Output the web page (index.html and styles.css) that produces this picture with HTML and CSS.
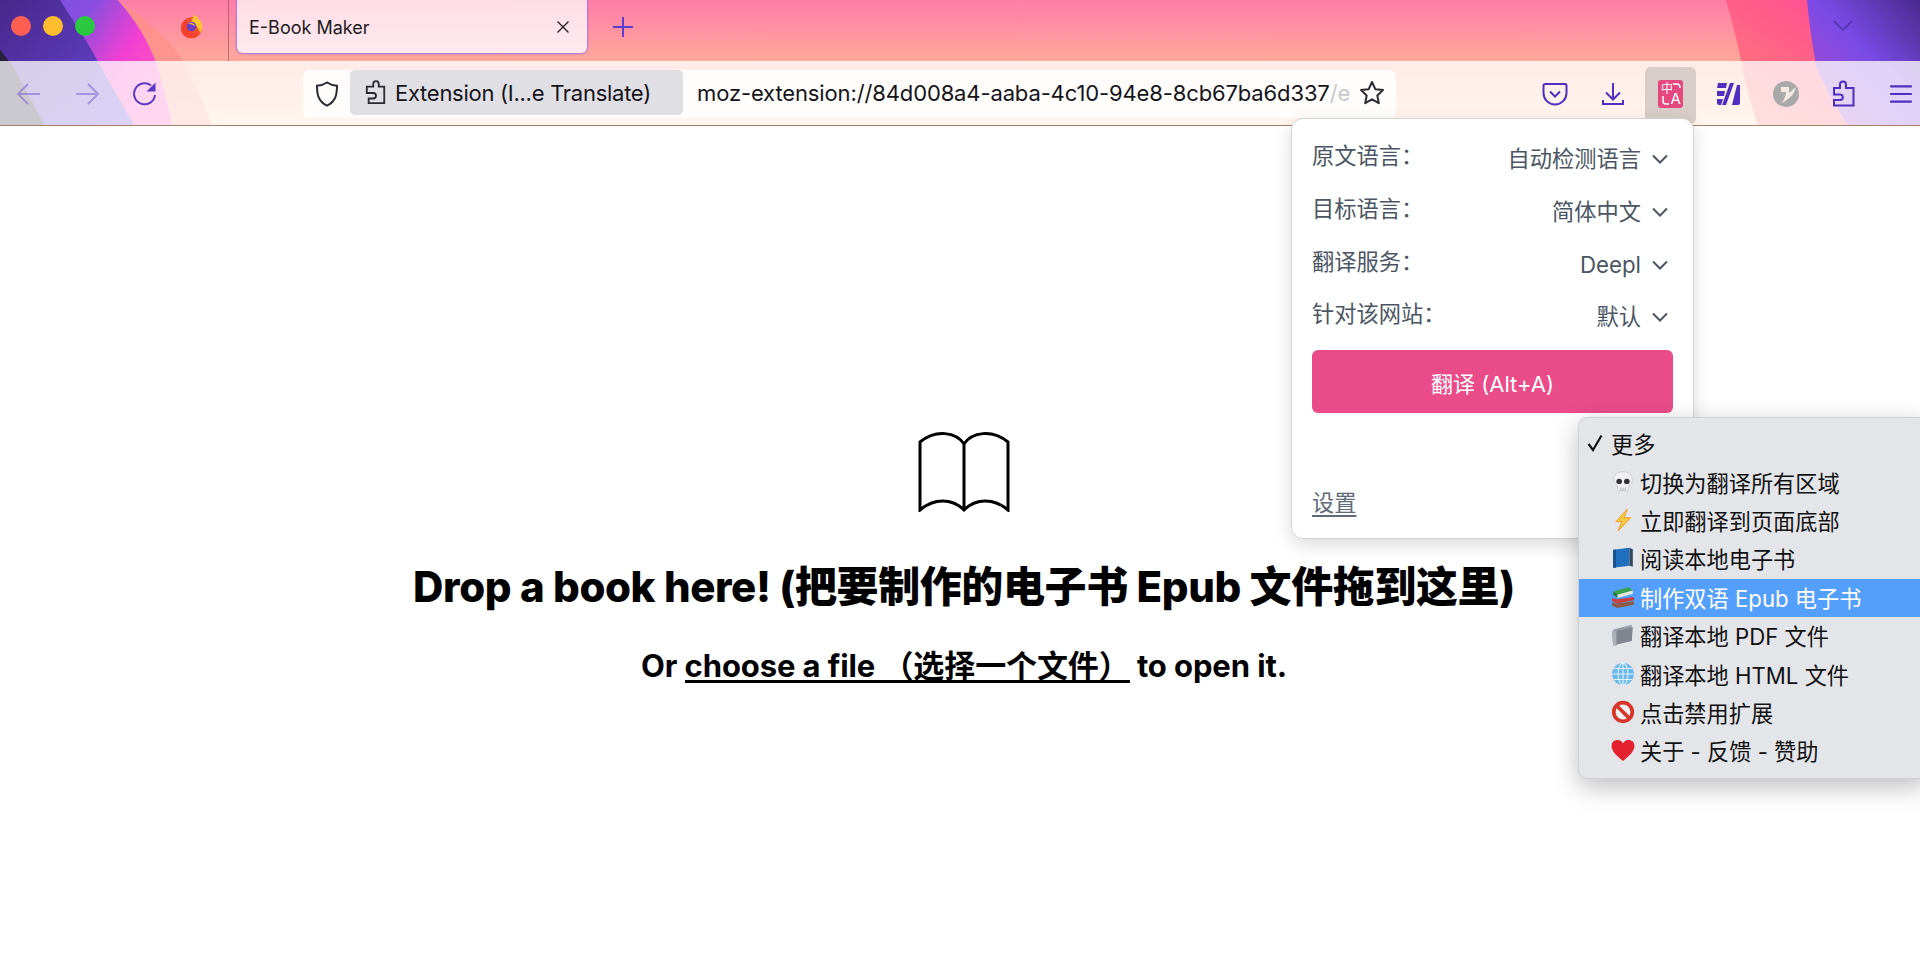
FILE: index.html
```html
<!DOCTYPE html>
<html lang="zh-CN">
<head>
<meta charset="utf-8">
<title>E-Book Maker</title>
<link rel="stylesheet" href="styles.css">
</head>
<body>
<header class="chrome">
  <svg class="theme" viewBox="0 0 1920 126" preserveAspectRatio="none" aria-hidden="true">
    <defs>
      <linearGradient id="base" x1="0" y1="0" x2="0" y2="1"><stop offset="0" stop-color="#ff7da9"/><stop offset=".5" stop-color="#ffa99a"/><stop offset="1" stop-color="#ffd9b8"/></linearGradient>
      <linearGradient id="vl" x1="0" y1="0" x2="1" y2=".5"><stop offset="0" stop-color="#6a4be0"/><stop offset=".45" stop-color="#8a4fe0"/><stop offset=".75" stop-color="#f23fd2"/><stop offset="1" stop-color="#ff55c0"/></linearGradient>
      <linearGradient id="dl" x1="0" y1="0" x2="1" y2="1"><stop offset="0" stop-color="#47288a"/><stop offset="1" stop-color="#6a48dc"/></linearGradient>
      <linearGradient id="vr" x1="1" y1="0" x2="0" y2="1"><stop offset="0" stop-color="#4a2a8c"/><stop offset=".45" stop-color="#7a4ae6"/><stop offset="1" stop-color="#b04cc8"/></linearGradient>
      <linearGradient id="pr" x1="0" y1="1" x2="1" y2="0"><stop offset="0" stop-color="#ff8070"/><stop offset="1" stop-color="#ff3fa0"/></linearGradient>
    </defs>
    <rect width="1920" height="126" fill="url(#base)"/>
    <path d="M0 0H118C150 22 172 42 186 66C196 86 204 106 212 126H0Z" fill="#ff8f88" opacity=".75"/>
    <path d="M0 0H118C135 20 148 40 157 66C163 86 168 106 172 126H0Z" fill="url(#vl)"/>
    <path d="M0 0H60C72 20 88 42 100 66C112 88 124 108 134 126H0Z" fill="url(#dl)"/>
    <path d="M0 50L12 66C25 88 35 108 44 126H0Z" fill="#28203c"/>
    <path d="M1726 0C1732 22 1738 44 1742 66C1746 88 1752 108 1758 126H1920V0Z" fill="url(#pr)"/>
    <path d="M1807 0C1809 22 1812 44 1816 66C1824 88 1836 108 1848 126H1920V0Z" fill="url(#vr)"/>
  </svg>

  <div class="tabbar">
    <div class="lights"><span class="light red"></span><span class="light yellow"></span><span class="light green"></span></div>
    <svg class="fx" viewBox="0 0 26 26" aria-hidden="true">
      <circle cx="13" cy="15" r="11" fill="#f0532f"/>
      <path d="M15 1c3 2 9 6 9 13 0 3-1 5-2 6-2-6-6-10-10-11 2-2 3-5 3-8z" fill="#ffc52e"/>
      <path d="M3 12c1-3 3-5 5-6-1 2 0 3 1 3 4-1 8 1 8 5 0 4-3 6-6 6 4 2 9 0 10-4 0 6-5 9-10 9-6 0-10-5-8-13z" fill="#f4402f"/>
      <circle cx="13" cy="13.500" r="5" fill="#6b3fc4"/>
      <path d="M9 10c3-1 7 0 8 3-2-1-5-2-8-3z" fill="#ffb84a"/>
    </svg>
    <span class="tab-sep"></span>
    <div class="tab">
      <span class="tab-title">E-Book Maker</span>
      <svg class="tab-close" viewBox="0 0 14 14" aria-hidden="true"><path d="M1.500 1.500l11 11M12.500 1.500l-11 11"/></svg>
    </div>
    <svg class="new-tab" viewBox="0 0 22 22" aria-hidden="true"><path d="M11 1v20M1 11h20"/></svg>
    <svg class="all-tabs" viewBox="0 0 20 12" aria-hidden="true"><path d="M1 1l9 9 9-9"/></svg>
  </div>

  <div class="toolbar">
    <div class="nav">
      <button class="nav-btn dim"><svg viewBox="0 0 26 26" aria-hidden="true"><path d="M24 13H2M12 3L2 13l10 10"/></svg></button>
      <button class="nav-btn dim"><svg viewBox="0 0 26 26" aria-hidden="true"><path d="M2 13h22M14 3l10 10-10 10"/></svg></button>
      <button class="nav-btn"><svg viewBox="0 0 26 26" aria-hidden="true"><path d="M23 14a10.500 10.500 0 1 1-4-9.500"/><path class="fill" d="M23.500 1.500v9h-9z"/></svg></button>
    </div>
    <div class="urlbar">
      <svg class="shield" viewBox="0 0 24 26" aria-hidden="true"><path d="M12 1.500c3 2 6 3 10 3.200 0 8-1 16-10 20C3 20.700 2 12.700 2 4.700c4-.2 7-1.200 10-3.200z"/></svg>
      <div class="chip">
        <svg class="chip-icon" viewBox="0 0 24 26" aria-hidden="true"><path d="M9 3a3 3 0 0 1 6 0v3h6v18H4v-5h5a3 3 0 0 0 0-6H2V6h7z"/></svg>
        <span>Extension (I...e Translate)</span>
      </div>
      <div class="url"><span>moz-extension://84d008a4-aaba-4c10-94e8-8cb67ba6d337</span><span class="url-fade">/e</span></div>
      <svg class="star" viewBox="0 0 26 26" aria-hidden="true"><path d="M13 2l3.300 7.200 7.700.9-5.700 5.300 1.500 7.800L13 19.300 6.200 23.200l1.500-7.800L2 10.100l7.700-.9z"/></svg>
    </div>
    <div class="actions">
      <button class="act"><svg viewBox="0 0 26 26" aria-hidden="true"><path d="M3 3h20a1.500 1.500 0 0 1 1.500 1.500V12a11.500 11.500 0 0 1-23 0V4.500A1.500 1.500 0 0 1 3 3z"/><path d="M8 10.500l5 5 5-5"/></svg></button>
      <button class="act"><svg viewBox="0 0 26 26" aria-hidden="true"><path d="M13 2v16M6 11.500l7 7 7-7M3 19v4h20v-4"/></svg></button>
      <button class="act active">
        <span class="tr-logo">
          <span class="tr-zh">中</span><span class="tr-en">A</span>
          <svg class="tr-marks" viewBox="0 0 25 28" aria-hidden="true"><path d="M15 4h4q3 0 3 4M5 16v5q0 3 3 3h3"/></svg>
        </span>
      </button>
      <button class="act"><svg viewBox="0 0 24 26" aria-hidden="true"><path class="solid" d="M2 2h9l-1 5H1zM1 10h8l-1 5H1zM1 18h6l-2 6H3q-2 0-2-2zM14 2h4l-8 22H6zM21 4h3v18q0 2-2 2h-6z"/></svg></button>
      <button class="act"><svg viewBox="0 0 26 26" aria-hidden="true"><circle class="grey" cx="13" cy="13" r="13"/><path class="white" d="M8 6h8v6l7-6c-2 8-7 12-14 16 2-4 4-7 4-11H8z"/></svg></button>
      <button class="act"><svg viewBox="0 0 24 26" aria-hidden="true"><path d="M9 3.500a3 3 0 0 1 6 0V7h7.500v17.500H3V19h6a2.800 2.800 0 0 0 0-5.600H3V7h6z"/></svg></button>
      <button class="act"><svg viewBox="0 0 24 20" aria-hidden="true"><path d="M2 3h20M2 10h20M2 17h20"/></svg></button>
    </div>
  </div>
</header>

<main class="page">
  <svg class="book" viewBox="0 0 92 82" aria-hidden="true"><path d="M46 14C38 2 18-1 2 12v68c14-12 32-12 44 0 12-12 30-12 44 0V12C74-1 54 2 46 14zM46 14v66"/></svg>
  <h1 class="drop-title">Drop a book here! (把要制作的电子书 Epub 文件拖到这里)</h1>
  <p class="drop-sub">Or <a class="file-link" href="#">choose a file （选择一个文件）</a> to open it.</p>
</main>

<section class="popup">
  <div class="row"><span class="row-label">原文语言：</span><span class="row-value">自动检测语言<svg class="chev" viewBox="0 0 16 10" aria-hidden="true"><path d="M1 1.500l7 7 7-7"/></svg></span></div>
  <div class="row"><span class="row-label">目标语言：</span><span class="row-value">简体中文<svg class="chev" viewBox="0 0 16 10" aria-hidden="true"><path d="M1 1.500l7 7 7-7"/></svg></span></div>
  <div class="row"><span class="row-label">翻译服务：</span><span class="row-value">Deepl<svg class="chev" viewBox="0 0 16 10" aria-hidden="true"><path d="M1 1.500l7 7 7-7"/></svg></span></div>
  <div class="row"><span class="row-label">针对该网站：</span><span class="row-value">默认<svg class="chev" viewBox="0 0 16 10" aria-hidden="true"><path d="M1 1.500l7 7 7-7"/></svg></span></div>
  <button class="translate-btn">翻译 (Alt+A)</button>
  <a class="settings" href="#">设置</a>
</section>

<nav class="menu">
  <div class="menu-head"><svg class="check" viewBox="0 0 16 18" aria-hidden="true"><path d="M1.500 10l4.500 6L14.500 1.500"/></svg><span>更多</span></div>
  <div class="menu-item">
    <svg class="emoji" viewBox="0 0 22 22" aria-hidden="true"><path d="M11 1.500c5.500 0 8.500 3 8.500 7.500 0 3-2 4.500-3.500 5.500v4.500H6v-4.500C4.500 13.500 2.500 12 2.500 9c0-4.500 3-7.500 8.500-7.500z" fill="#f0f0f3" stroke="#c4c4ca" stroke-width=".6"/><ellipse cx="7.500" cy="10.500" rx="2.600" ry="2.400" fill="#333"/><ellipse cx="14.500" cy="10.500" rx="2.600" ry="2.400" fill="#333"/><path d="M9 16v3M11 16v3M13 16v3" stroke="#999" stroke-width=".7"/></svg>
    <span>切换为翻译所有区域</span></div>
  <div class="menu-item">
    <svg class="emoji" viewBox="0 0 22 22" aria-hidden="true"><path d="M15 1L4.500 12.500H10L6.500 21 18 9h-6z" fill="#f7c93c" stroke="#ee9a2a" stroke-width=".9" stroke-linejoin="round"/></svg>
    <span>立即翻译到页面底部</span></div>
  <div class="menu-item">
    <svg class="emoji" viewBox="0 0 22 22" aria-hidden="true"><path d="M2 3.500L17 1.500v16.500L2 20z" fill="#1f6fbd"/><path d="M17 1.500l3 1.500v16l-3-1z" fill="#35475c"/><path d="M2 3.500h2.500V20H2z" fill="#174f8c"/></svg>
    <span>阅读本地电子书</span></div>
  <div class="menu-item selected">
    <svg class="emoji" viewBox="0 0 22 22" aria-hidden="true"><path d="M2 6l14-4 4 3-14 4z" fill="#3ca24a"/><path d="M2 6l4 3v3L2 9z" fill="#2a7a36"/><path d="M6 9l14-4v3L6 12z" fill="#e8e8d8"/><path d="M1 12l5 1 15-2v3L6 17l-5-2z" fill="#c4413c"/><path d="M1 16l5 1 15-2v3L6 21l-5-2z" fill="#8c5a44"/></svg>
    <span>制作双语 Epub 电子书</span></div>
  <div class="menu-item">
    <svg class="emoji" viewBox="0 0 22 22" aria-hidden="true"><path d="M2 6l17-4.500V16L2 20.500z" fill="#9aa0a8"/><path d="M1 8l4-1 15-3-1 12.500L2 20.500z" fill="#7f868f"/><path d="M1 8l4-1v14l-3-.5z" fill="#aab0b8"/></svg>
    <span>翻译本地 PDF 文件</span></div>
  <div class="menu-item">
    <svg class="emoji" viewBox="0 0 22 22" aria-hidden="true"><circle cx="11" cy="11" r="10" fill="#6cb8ea"/><g fill="none" stroke="#e0f2fb" stroke-width="1"><ellipse cx="11" cy="11" rx="4.500" ry="10"/><path d="M11 1v20M1 11h20M2.500 6h17M2.500 16h17"/></g></svg>
    <span>翻译本地 HTML 文件</span></div>
  <div class="menu-item">
    <svg class="emoji" viewBox="0 0 22 22" aria-hidden="true"><circle cx="11" cy="11" r="8.500" fill="#f2f2f2" stroke="#d8352a" stroke-width="3.400"/><path d="M5 5l12 12" stroke="#d8352a" stroke-width="3.400"/></svg>
    <span>点击禁用扩展</span></div>
  <div class="menu-item">
    <svg class="emoji" viewBox="0 0 22 22" aria-hidden="true"><path d="M11 21C5 16 .5 12 .5 7A5.500 5.500 0 0 1 11 5a5.500 5.500 0 0 1 10.500 2c0 5-4.500 9-10.500 14z" fill="#e3212f"/></svg>
    <span>关于 - 反馈 - 赞助</span></div>
</nav>
</body>
</html>
```
FILE: styles.css
```css
* { box-sizing: border-box; }
html, body { margin: 0; height: 100%; }
body {
  width: 1920px;
  height: 960px;
  overflow: hidden;
  background: #fff;
  color: #000;
  font-family: "Inter", "Noto Sans CJK SC", sans-serif;
  position: relative;
}
button { border: 0; background: none; padding: 0; font: inherit; }

/* browser chrome */
.chrome {
  position: relative;
  height: 126px;
  display: flex;
  flex-direction: column;
  border-bottom: 1px solid #a5806f;
  overflow: hidden;
}
.theme { position: absolute; inset: 0; width: 100%; height: 100%; }
.tabbar {
  position: relative;
  height: 61px;
  display: flex;
  align-items: flex-start;
}
.lights { display: flex; gap: 12px; padding: 16px 0 0 11px; width: 179px; }
.light { width: 20px; height: 20px; border-radius: 50%; }
.red { background: #ff5f52; }
.yellow { background: #ffbd2e; }
.green { background: #2ac840; }
.fx { width: 25px; height: 26px; margin-top: 13px; }
.tab-sep { width: 1px; height: 61px; background: rgba(120, 70, 80, .55); margin-left: 24px; }
.tab {
  width: 350px;
  height: 53px;
  margin-left: 8px;
  display: flex;
  align-items: center;
  justify-content: space-between;
  padding: 0 17px 0 12px;
  background: linear-gradient(#ffdde6, #ffe9ef);
  border-radius: 0 0 6px 6px;
  box-shadow: 0 0 2px 1px #a077dc;
  color: #1c1b22;
  font-size: 18px;
}
.tab-title { padding-top: 2px; }
.tab-close { width: 14px; height: 14px; fill: none; stroke: #222; stroke-width: 1.400; }
.new-tab { width: 22px; height: 22px; margin: 16px 0 0 25px; fill: none; stroke: #5b3fd0; stroke-width: 2; }
.all-tabs { width: 20px; height: 12px; margin: 20px 67px 0 auto; fill: none; stroke: #5936b8; stroke-width: 1.800; }

.toolbar {
  position: relative;
  flex: 1;
  display: flex;
  align-items: flex-start;
  padding-top: 9px;
  background: rgba(255, 255, 255, .76);
}
.nav { display: flex; width: 174px; }
.nav-btn {
  width: 58px;
  height: 48px;
  display: flex;
  align-items: center;
  justify-content: center;
}
.nav-btn svg { width: 26px; height: 26px; fill: none; stroke: #5a3ac4; stroke-width: 2; }
.nav-btn svg .fill { fill: #5a3ac4; stroke: none; }
.nav-btn.dim svg { opacity: .4; }

.urlbar {
  width: 1093px;
  height: 48px;
  margin-left: 129px;
  display: flex;
  align-items: flex-start;
  background: rgba(255, 255, 255, .82);
  border-radius: 6px;
  color: #15141a;
  font-size: 22px;
}
.shield { width: 24px; height: 26px; margin: 11px 0 0 12px; flex: none; fill: none; stroke: #2b2a33; stroke-width: 2; }
.chip {
  width: 333px;
  height: 45px;
  flex: none;
  margin-left: 11px;
  display: flex;
  align-items: center;
  gap: 8px;
  padding-left: 15px;
  background: #e0dfe3;
  border-radius: 5px;
  white-space: nowrap;
  letter-spacing: -.27px;
}
.chip-icon { width: 22px; height: 26px; flex: none; fill: none; stroke: #2b2a33; stroke-width: 2; }
.url { width: 650px; flex: none; margin-left: 14px; height: 45px; display: flex; align-items: center; white-space: nowrap; letter-spacing: -.13px; }
.url-fade { color: #c9c8cc; }
.star { width: 26px; height: 26px; margin: 10px 0 0 12px; flex: none; fill: none; stroke: #2b2a33; stroke-width: 2; stroke-linejoin: round; }

.actions { display: flex; gap: 31.670px; margin-left: auto; padding-right: 6px; }
.act {
  position: relative;
  width: 26px;
  height: 48px;
  display: flex;
  align-items: center;
  justify-content: center;
}
.act svg { width: 26px; height: 26px; flex: none; fill: none; stroke: #4f2fbf; stroke-width: 2; overflow: visible; }
.act svg .solid { fill: #4f2fbf; stroke: none; }
.act svg .grey { fill: #a9a9a9; stroke: none; }
.act svg .white { fill: #f3ece6; stroke: none; }
.act.active::before {
  content: "";
  position: absolute;
  left: -12.500px;
  top: -3px;
  width: 51px;
  height: 57px;
  background: #d8cdc8;
  border-radius: 6px;
}
.tr-logo {
  position: relative;
  width: 25px;
  height: 28px;
  background: #e5477f;
  border-radius: 3px;
  color: #fff;
}
.tr-zh { position: absolute; left: 3px; top: 2px; font-size: 12px; line-height: 13px; }
.tr-en { position: absolute; right: 2px; bottom: 2px; font-size: 15px; line-height: 15px; }
.act svg.tr-marks { position: absolute; inset: 0; width: 25px; height: 28px; stroke: #fff; stroke-width: 1.500; }

/* page */
.page {
  display: flex;
  flex-direction: column;
  align-items: center;
  padding: 304px 0 0 8px;
}
.book { width: 92px; height: 82px; fill: none; stroke: #000; stroke-width: 3; }
.drop-title {
  margin: 46px 0 0;
  font-size: 42px;
  line-height: 58px;
  font-weight: 800;
  letter-spacing: -.4px;
  white-space: nowrap;
}
.drop-sub {
  margin: 28px 0 0;
  font-size: 31px;
  line-height: 44px;
  font-weight: 700;
  letter-spacing: -.1px;
}
.file-link { color: #000; text-decoration: none; border-bottom: 3px solid #000; display: inline-block; line-height: 28px; }

/* popup */
.popup {
  position: absolute;
  left: 1291px;
  top: 118px;
  width: 403px;
  height: 421px;
  display: flex;
  flex-direction: column;
  padding: 19px 20px 0;
  background: #fff;
  border: 1px solid #d4d4d6;
  border-radius: 12px;
  box-shadow: 0 6px 18px rgba(0, 0, 0, .14);
  font-family: "Inter", "Noto Sans CJK SC", sans-serif;
  font-size: 22.250px;
  color: #4b5563;
}
.row {
  height: 52.750px;
  flex: none;
  display: flex;
  justify-content: space-between;
  align-items: flex-start;
  line-height: 36px;
}
.row-value { display: flex; align-items: center; margin-top: 3px; white-space: nowrap; }
.chev { width: 16px; height: 10px; margin: 0 5px 0 11px; fill: none; stroke: #4b5563; stroke-width: 2; }
.translate-btn {
  height: 63px;
  flex: none;
  margin-top: 1px;
  background: #ea4c89;
  border-radius: 6px;
  color: #fff;
  font-size: 22px;
  font-family: inherit;
}
.settings { align-self: flex-start; margin-top: 71.500px; line-height: 36px; color: #5f6b78; text-decoration: underline; text-underline-offset: 4px; }

/* native context menu */
.menu {
  position: absolute;
  left: 1578px;
  top: 417px;
  width: 350px;
  height: 362px;
  padding-top: 7px;
  background: #e4e5e9;
  border: 1px solid #cfd0d4;
  border-radius: 9px;
  box-shadow: 0 8px 26px rgba(0, 0, 0, .26);
  font-family: "Inter", "Noto Sans CJK SC", sans-serif;
  font-size: 22.200px;
  color: #111;
}
.menu-head, .menu-item { height: 38.400px; display: flex; align-items: center; white-space: nowrap; padding-bottom: 2px; }
.menu-head { padding-left: 8px; }
.check { width: 16px; height: 18px; margin-right: 8px; fill: none; stroke: #111; stroke-width: 2.200; }
.menu-item { padding-left: 32px; }
.emoji { width: 24px; height: 24px; margin-right: 5px; flex: none; }
.selected { background: #549ffc; color: #fff; }
```
